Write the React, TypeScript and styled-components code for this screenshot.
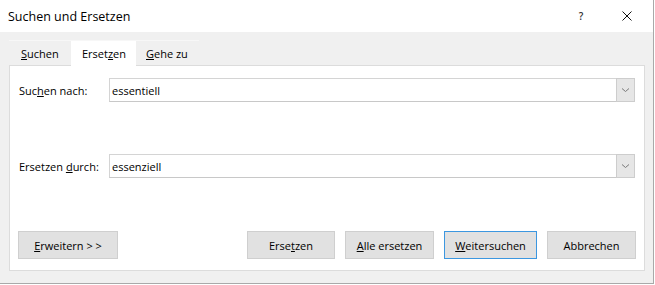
import styled, { createGlobalStyle } from 'styled-components'

const GlobalStyle = createGlobalStyle`
    html, body {
        margin: 0;
        padding: 0;
        background: #ffffff;
    }
    * {
        box-sizing: border-box;
    }
    body {
        font-family: "Open Sans", "Noto Sans", sans-serif;
        font-size: 11px;
        color: #000;
    }
`

const Window = styled.div`
    width: 654px;
    height: 284px;
    background: #f0f0f0;
    border-right: 1px solid #a9a9a9;
    border-bottom: 1px solid #a9a9a9;
    display: flex;
    flex-direction: column;
`

const TitleBar = styled.div`
    height: 32px;
    background: #ffffff;
    display: flex;
    align-items: center;
    padding-left: 8px;
    padding-right: 3px;
`

const Title = styled.div`
    flex: 1;
    font-size: 12.5px;
    color: #000;
`

const TitleButton = styled.div`
    width: 46px;
    height: 32px;
    display: flex;
    align-items: center;
    justify-content: center;
    font-size: 10px;
    font-weight: 600;
    color: #333;
`

const Body = styled.div`
    flex: 1;
    padding: 8px 8px 0 9px;
    display: flex;
    flex-direction: column;
`

const TabRow = styled.div`
    display: flex;
    height: 26px;
    border-top: 1px solid #f7f7f7;
    align-self: flex-start;
`

const Tab = styled.div<{ $active?: boolean; $w: number; $pad: number }>`
    height: 25px;
    width: ${p => p.$w}px;
    padding-left: ${p => p.$pad}px;
    display: flex;
    align-items: center;
    white-space: nowrap;
    background: ${p => (p.$active ? '#ffffff' : 'transparent')};
    position: relative;
    z-index: 1;
`

const Panel = styled.div`
    width: 636px;
    height: 206px;
    margin-top: -1px;
    background: #ffffff;
    border: 1px solid #dcdcdc;
    padding: 12px 8px 11px 8px;
    display: flex;
    flex-direction: column;
`

const FieldRow = styled.div<{ $gap?: number }>`
    display: flex;
    align-items: center;
    padding: 0 1px;
    margin-top: ${p => p.$gap ?? 0}px;
`

const Label = styled.label`
    width: 90px;
    flex: none;
    white-space: nowrap;
`

const Combo = styled.div`
    flex: 1;
    height: 24px;
    display: flex;
`

const Edit = styled.div`
    flex: 1;
    border: 1px solid #d4d4d4;
    border-right: none;
    border-bottom-color: #c8c8c8;
    padding-left: 2px;
    display: flex;
    align-items: center;
`

const DropButton = styled.div`
    width: 19px;
    background: #e6e6e6;
    border: 1px solid #cdcdcd;
    display: flex;
    align-items: center;
    justify-content: center;
`

const ButtonRow = styled.div`
    margin-top: auto;
    display: flex;
    align-items: center;
`

const Spacer = styled.div`
    flex: 1;
`

const Button = styled.div<{ $w: number; $default?: boolean }>`
    width: ${p => p.$w}px;
    height: 28px;
    margin-left: 10px;
    background: #e1e1e1;
    border: 1px solid ${p => (p.$default ? '#3c97e0' : '#cfcfcf')};
    display: flex;
    align-items: center;
    justify-content: center;
    white-space: nowrap;
    &:first-child {
        margin-left: 0;
    }
`

const Chevron = () => (
    <svg width="9" height="6" viewBox="0 0 9 6">
        <path d="M1 1.5 L4.5 4.5 L8 1.5" fill="none" stroke="#7a7a7a" strokeWidth="1" />
    </svg>
)

const CloseIcon = () => (
    <svg width="10" height="10" viewBox="0 0 10 10">
        <path d="M0.5 0.5 L9.5 9.5 M9.5 0.5 L0.5 9.5" stroke="#111" strokeWidth="1" />
    </svg>
)

const App: React.FC = () => {
    return (
        <>
            <GlobalStyle />
            <Window>
                <TitleBar>
                    <Title>Suchen und Ersetzen</Title>
                    <TitleButton>?</TitleButton>
                    <TitleButton><CloseIcon /></TitleButton>
                </TitleBar>
                <Body>
                    <TabRow>
                        <Tab $w={62} $pad={12}><u>S</u>uchen</Tab>
                        <Tab $active $w={65} $pad={11}>Erset<u>z</u>en</Tab>
                        <Tab $w={63} $pad={10}><u>G</u>ehe zu</Tab>
                    </TabRow>
                    <Panel>
                        <FieldRow>
                            <Label>Suc<u>h</u>en nach:</Label>
                            <Combo>
                                <Edit>essentiell</Edit>
                                <DropButton><Chevron /></DropButton>
                            </Combo>
                        </FieldRow>
                        <FieldRow $gap={52}>
                            <Label>Ersetzen <u>d</u>urch:</Label>
                            <Combo>
                                <Edit>essenziell</Edit>
                                <DropButton><Chevron /></DropButton>
                            </Combo>
                        </FieldRow>
                        <ButtonRow>
                            <Button $w={100}><span><u>E</u>rweitern &gt; &gt;</span></Button>
                            <Spacer />
                            <Button $w={88}><span>Erse<u>t</u>zen</span></Button>
                            <Button $w={89}><span><u>A</u>lle ersetzen</span></Button>
                            <Button $w={93} $default><span><u>W</u>eitersuchen</span></Button>
                            <Button $w={89}><span>Abbrechen</span></Button>
                        </ButtonRow>
                    </Panel>
                </Body>
            </Window>
        </>
    )
}

export default App
